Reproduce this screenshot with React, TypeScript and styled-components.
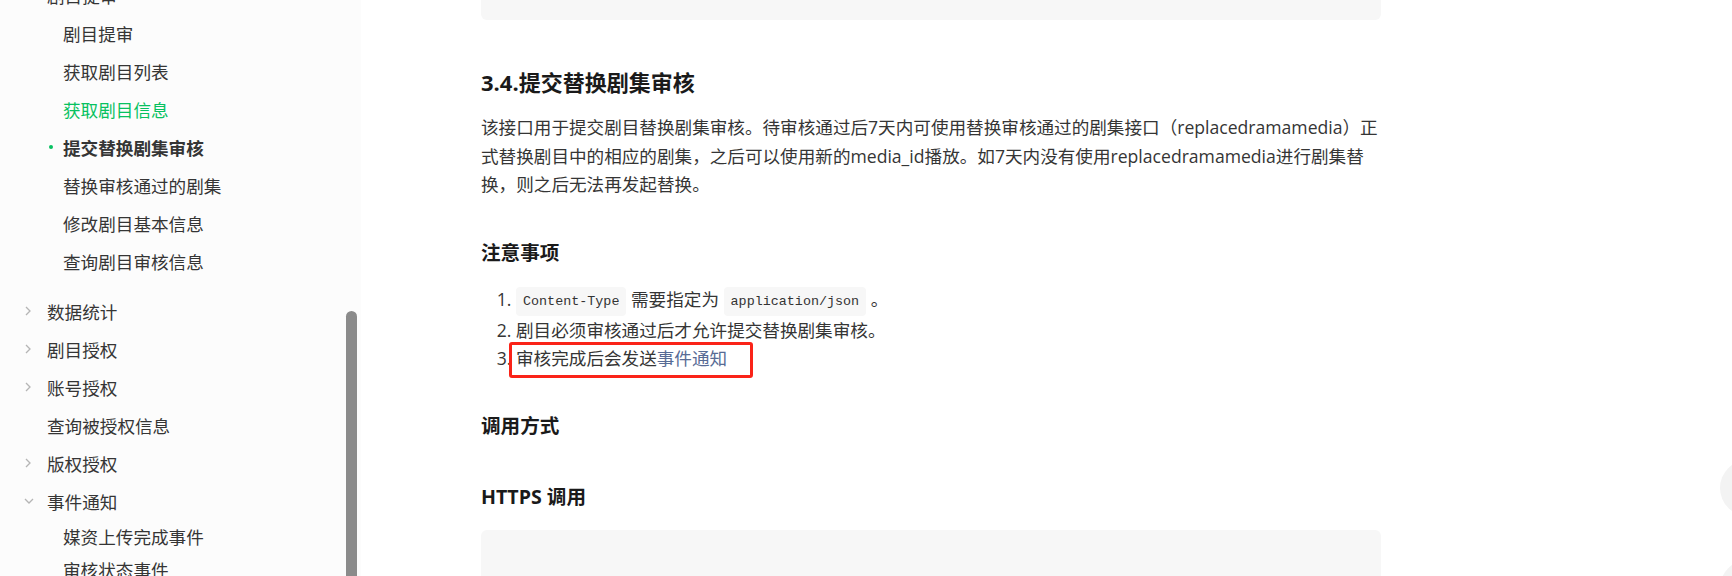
import React from "react";
import styled, { createGlobalStyle } from "styled-components";

const GlobalStyle = createGlobalStyle`
  html, body {
    margin: 0;
    padding: 0;
    background: #fff;
    overflow: hidden;
  }
  body {
    font-family: "Open Sans", "Noto Sans CJK SC", sans-serif;
    color: #333;
  }
`;

const Page = styled.div`
  display: flex;
  height: 576px;
  overflow: hidden;
  position: relative;
`;

const Sidebar = styled.aside`
  position: relative;
  width: 361px;
  flex-shrink: 0;
  height: 576px;
  background: #fcfcfc;
  overflow: hidden;
`;

const NavList = styled.div`
  display: flex;
  flex-direction: column;
  margin-top: -24px;
`;

const NavGroup = styled.div<{ $gapAfter?: number }>`
  display: flex;
  flex-direction: column;
  margin-bottom: ${(p) => p.$gapAfter ?? 0}px;
`;

const NavRow = styled.div<{ $child?: boolean; $active?: boolean; $current?: boolean; $h?: number }>`
  position: relative;
  display: flex;
  align-items: center;
  height: ${(p) => p.$h ?? 38}px;
  padding-left: ${(p) => (p.$child ? 63 : 21)}px;
  font-size: 17.6px;
  white-space: nowrap;
  color: ${(p) => (p.$active ? "#07c160" : "#353535")};
  font-weight: ${(p) => (p.$current ? 700 : 400)};
`;

const Chevron = styled.span`
  display: inline-flex;
  width: 24px;
  justify-content: flex-start;
  padding-left: 2px;
  color: #b5b5b5;
`;

const Dot = styled.span`
  position: absolute;
  left: 49px;
  top: 50%;
  width: 4px;
  height: 4px;
  margin-top: -2px;
  border-radius: 50%;
  background: #07c160;
`;

const ScrollThumb = styled.div`
  position: absolute;
  left: 346px;
  top: 311px;
  width: 11px;
  height: 300px;
  border-radius: 6px;
  background: #8b8b8b;
`;

const Main = styled.main`
  flex: 1;
  padding-left: 120px;
`;

const Content = styled.div`
  width: 900px;
  display: flex;
  flex-direction: column;
`;

const CodeBlock = styled.div<{ $h: number; $top?: boolean; $mt?: number }>`
  height: ${(p) => p.$h}px;
  margin-top: ${(p) => p.$mt ?? 0}px;
  background: #f7f7f7;
  border-radius: ${(p) => (p.$top ? "0 0 6px 6px" : "6px 6px 0 0")};
`;

const Title = styled.h2`
  margin: 47px 0 0;
  font-size: 22px;
  line-height: 31px;
  font-weight: 700;
  color: #1a1a1a;
`;

const Para = styled.p`
  margin: 15px 0 0;
  font-size: 17.6px;
  line-height: 28.6px;
  color: #353535;
  white-space: nowrap;
`;

const SubTitle = styled.h3<{ $mt: number }>`
  margin: ${(p) => p.$mt}px 0 0;
  font-size: 19.6px;
  line-height: 28px;
  font-weight: 700;
  color: #1a1a1a;
`;

const List = styled.ol`
  margin: 18px 0 0;
  padding-left: 35px;
  font-size: 17.6px;
  line-height: 28.6px;
  color: #353535;
`;

const Item = styled.li`
  position: relative;
  white-space: nowrap;
`;

const Code = styled.code`
  display: inline-block;
  font-family: "Liberation Mono", "DejaVu Sans Mono", monospace;
  font-size: 13.4px;
  line-height: 29px;
  padding: 0 7px;
  background: #f7f7f7;
  border-radius: 4px;
  color: #333;
  vertical-align: middle;
`;

const Link = styled.a`
  color: #576b95;
  text-decoration: none;
`;

const Highlight = styled.span`
  position: absolute;
  left: -7px;
  top: -2px;
  width: 244px;
  height: 36px;
  box-sizing: border-box;
  border: 3px solid #fa2318;
  border-radius: 3px;
  pointer-events: none;
`;

const FloatBtn = styled.div<{ $top: number }>`
  position: absolute;
  left: 1720px;
  top: ${(p) => p.$top}px;
  width: 56px;
  height: 56px;
  border-radius: 50%;
  background: #f3f3f3;
`;

const ChevronRight = () => (
  <svg width="10" height="12" viewBox="0 0 10 12">
    <polyline points="3,2 7,6 3,10" fill="none" stroke="currentColor" strokeWidth="1.3" />
  </svg>
);

const ChevronDown = () => (
  <svg width="12" height="10" viewBox="0 0 12 10">
    <polyline points="2,3 6,7 10,3" fill="none" stroke="currentColor" strokeWidth="1.3" />
  </svg>
);

const dramaChildren = [
  "剧目提审",
  "获取剧目列表",
  "获取剧目信息",
  "提交替换剧集审核",
  "替换审核通过的剧集",
  "修改剧目基本信息",
  "查询剧目审核信息",
];

const App = () => {
  return (
    <>
      <GlobalStyle />
      <Page>
        <Sidebar>
          <NavList>
            <NavRow>
              <Chevron>
                <ChevronDown />
              </Chevron>
              剧目提审
            </NavRow>
            <NavGroup $gapAfter={12}>
              {dramaChildren.map((t) => (
                <NavRow
                  key={t}
                  $child
                  $active={t === "获取剧目信息"}
                  $current={t === "提交替换剧集审核"}
                >
                  {t === "提交替换剧集审核" && <Dot />}
                  {t}
                </NavRow>
              ))}
            </NavGroup>
            <NavRow>
              <Chevron>
                <ChevronRight />
              </Chevron>
              数据统计
            </NavRow>
            <NavRow>
              <Chevron>
                <ChevronRight />
              </Chevron>
              剧目授权
            </NavRow>
            <NavRow>
              <Chevron>
                <ChevronRight />
              </Chevron>
              账号授权
            </NavRow>
            <NavRow>
              <Chevron />
              查询被授权信息
            </NavRow>
            <NavRow>
              <Chevron>
                <ChevronRight />
              </Chevron>
              版权授权
            </NavRow>
            <NavRow>
              <Chevron>
                <ChevronDown />
              </Chevron>
              事件通知
            </NavRow>
            <NavGroup>
              <NavRow $child $h={33}>媒资上传完成事件</NavRow>
              <NavRow $child $h={33}>审核状态事件</NavRow>
            </NavGroup>
          </NavList>
          <ScrollThumb />
        </Sidebar>
        <Main>
          <Content>
            <CodeBlock $h={20} $top />
            <Title>3.4.提交替换剧集审核</Title>
            <Para>
              该接口用于提交剧目替换剧集审核。待审核通过后7天内可使用替换审核通过的剧集接口（replacedramamedia）正
              <br />
              式替换剧目中的相应的剧集，之后可以使用新的media_id播放。如7天内没有使用replacedramamedia进行剧集替
              <br />
              换，则之后无法再发起替换。
            </Para>
            <SubTitle $mt={40}>注意事项</SubTitle>
            <List>
              <Item>
                <Code>Content-Type</Code> 需要指定为 <Code>application/json</Code> 。
              </Item>
              <Item>剧目必须审核通过后才允许提交替换剧集审核。</Item>
              <Item>
                审核完成后会发送<Link href="#">事件通知</Link>
                <Highlight />
              </Item>
            </List>
            <SubTitle $mt={39}>调用方式</SubTitle>
            <SubTitle $mt={43}>HTTPS 调用</SubTitle>
            <CodeBlock $h={60} $mt={19} />
          </Content>
        </Main>
        <FloatBtn $top={460} />
        <FloatBtn $top={560} />
      </Page>
    </>
  );
};

export default App;
